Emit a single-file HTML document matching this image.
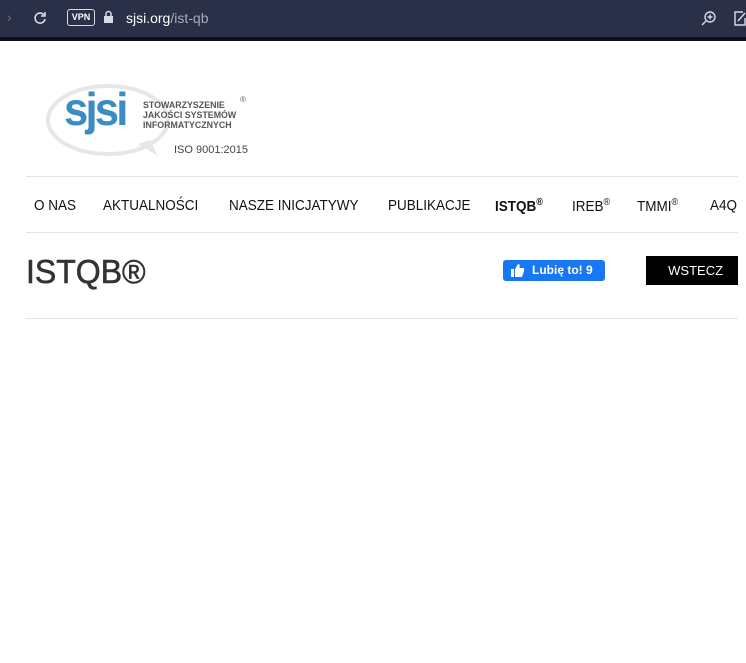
<!DOCTYPE html>
<html><head><meta charset="utf-8"><style>
body{margin:0;width:746px;height:663px;overflow:hidden;background:#fff;font-family:"Liberation Sans",sans-serif;position:relative}
.bar{position:absolute;left:0;top:0;width:746px;height:37px;background:#2a3048}
.strip{position:absolute;left:0;top:37px;width:746px;height:4px;background:#0c0e18}
.a{position:absolute;white-space:nowrap}
.nav{top:197px;font-size:15px;color:#111;transform:scaleX(0.9);transform-origin:left}
.nav sup{font-size:10px}
.line{position:absolute;left:26px;width:712px;height:1px;background:#e4e4e4}
</style></head><body>
<div class="bar"></div><div class="strip"></div>
<div class="a" style="left:7px;top:9px;color:#6d7288;font-size:14px">›</div>
<svg class="a" style="left:33px;top:11px" width="14" height="14" viewBox="0 0 14 14"><path d="M11 4A5 5 0 1 0 12 8" stroke="#d8dbe6" stroke-width="1.6" fill="none"/><path d="M12 1v4H8" stroke="#d8dbe6" stroke-width="1.6" fill="none"/></svg>
<div class="a" style="left:67px;top:9px;width:26px;height:15px;border:1px solid #d8dbe6;border-radius:3px;color:#fff;font-size:9px;font-weight:bold;text-align:center;line-height:15px">VPN</div>
<svg class="a" style="left:103px;top:10px" width="11" height="14"><rect x="1" y="6" width="9" height="7" fill="#d8dbe6"/><path d="M3 6V4a2.5 2.5 0 0 1 5 0v2" stroke="#d8dbe6" stroke-width="1.5" fill="none"/></svg>
<div class="a" style="left:126px;top:10px;font-size:14px;color:#fff">sjsi.org<span style="color:#a6abbd">/ist-qb</span></div>
<svg class="a" style="left:701px;top:10px" width="16" height="16"><circle cx="9" cy="7" r="5" stroke="#d8dbe6" stroke-width="1.4" fill="none"/><path d="M5 11l-4 4M9 4.5v5M6.5 7h5" stroke="#d8dbe6" stroke-width="1.4"/></svg>
<svg class="a" style="left:734px;top:10px" width="12" height="16"><path d="M9 2H1v13h10V8" stroke="#d8dbe6" stroke-width="1.4" fill="none"/><path d="M4 11l7-8" stroke="#d8dbe6" stroke-width="1.4"/></svg>

<svg class="a" style="left:46px;top:80px" width="160" height="80"><ellipse cx="62" cy="40" rx="60" ry="34" fill="none" stroke="#e6e7e9" stroke-width="4"/><path d="M92 64l20 12-8-16z" fill="#e6e7e9"/></svg>
<div class="a" style="left:64px;top:86px;font-size:46px;font-weight:bold;color:#3a8cc2;letter-spacing:-3px;line-height:46px;transform:scaleX(0.95);transform-origin:left">sjsi</div>
<div class="a" style="left:143px;top:101px;font-size:9.5px;font-weight:bold;color:#555;line-height:10px;transform:scaleX(0.93);transform-origin:left">STOWARZYSZENIE<br>JAKOŚCI SYSTEMÓW<br>INFORMATYCZNYCH</div>
<div class="a" style="left:240px;top:95px;font-size:8px;color:#666">®</div>
<div class="a" style="left:174px;top:144px;font-size:11px;color:#444">ISO 9001:2015</div>

<div class="line" style="top:176px"></div>
<div class="a nav" style="left:34px">O NAS</div>
<div class="a nav" style="left:103px">AKTUALNOŚCI</div>
<div class="a nav" style="left:229px">NASZE INICJATYWY</div>
<div class="a nav" style="left:388px">PUBLIKACJE</div>
<div class="a nav" style="left:495px;font-weight:bold">ISTQB<sup>®</sup></div>
<div class="a nav" style="left:572px">IREB<sup>®</sup></div>
<div class="a nav" style="left:637px">TMMI<sup>®</sup></div>
<div class="a nav" style="left:710px">A4Q</div>
<div class="line" style="top:232px"></div>

<div class="a" style="left:26px;top:253px;font-size:33px;color:#333;-webkit-text-stroke:0.6px #333;transform:scaleX(0.97);transform-origin:left">ISTQB®</div>
<div class="a" style="left:503px;top:260px;width:102px;height:21px;background:#1877f2;border-radius:3px;color:#fff;font-size:12px;font-weight:bold;line-height:21px"><svg style="position:absolute;left:8px;top:4px" width="13" height="13"><rect x="0" y="5" width="3" height="8" fill="#fff"/><path d="M4 5l3-5c2 0 2 2 1.5 4H13v3l-2 6H4z" fill="#fff"/></svg><span style="position:absolute;left:29px">Lubię to! 9</span></div>
<div class="a" style="left:646px;top:256px;width:92px;height:29px;background:#000;color:#fff;font-size:13px;line-height:29px;text-align:center">&nbsp;&nbsp;WSTECZ</div>
<div class="line" style="top:318px"></div>
</body></html>
